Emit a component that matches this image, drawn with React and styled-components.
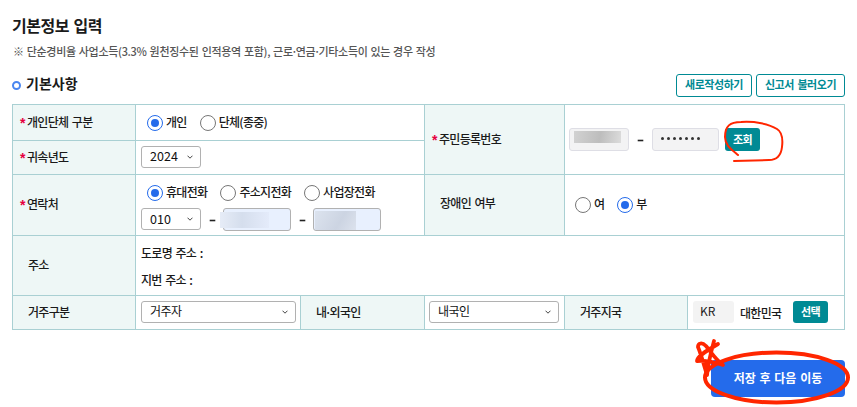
import React from 'react';
import styled, { createGlobalStyle, css } from 'styled-components';

const GlobalStyle = createGlobalStyle`
    * {
        box-sizing: border-box;
    }
    body {
        margin: 0;
        background: #fff;
        color: #1a1a1a;
        font-family: 'Noto Sans CJK KR', sans-serif;
        font-size: 12px;
        font-weight: 500;
        letter-spacing: -0.7px;
        word-spacing: 1.5px;
        line-height: 18px;
    }
`;

const Page = styled.main`
    position: relative;
    width: 857px;
    height: 407px;
    padding: 13px 12px 0;
    overflow: hidden;
`;

const Title = styled.h1`
    margin: 0;
    font-size: 16px;
    font-weight: 700;
    line-height: 24px;
    letter-spacing: -0.5px;
`;

const Notice = styled.p`
    margin: 6px 0 0 1px;
    color: #555;
    font-size: 11px;
    letter-spacing: -0.3px;
    word-spacing: 0.8px;
    line-height: 16px;
    white-space: nowrap;
`;

const Middot = styled.span`
    margin: 0 -1.5px;
`;

const SectionHeader = styled.div`
    display: flex;
    align-items: center;
    height: 23px;
    margin: 15px 0 7px;
`;

const Ring = styled.span`
    width: 9px;
    height: 9px;
    margin-right: 5px;
    border: 2px solid #4a86f0;
    border-radius: 50%;
`;

const SectionTitle = styled.h2`
    flex: 1;
    margin: 0;
    padding-bottom: 4px;
    font-size: 14px;
    font-weight: 700;
    line-height: 19px;
    letter-spacing: 0;
`;

const OutlineButton = styled.button`
    width: ${({ $width }) => $width}px;
    height: 23px;
    margin-left: 4px;
    padding: 0 0 2px;
    border: 1px solid #008a94;
    border-radius: 3px;
    background: #fff;
    color: #008a94;
    font: inherit;
    font-size: 11px;
    font-weight: 700;
    letter-spacing: -0.45px;
    word-spacing: 1.5px;
    line-height: 19px;
    white-space: nowrap;
`;

const FormGrid = styled.div`
    display: grid;
    grid-template-columns: 123px 165px 124px 140px 123px 157px;
    grid-template-rows: 36px 34px 61px 60px 34px;
    width: 833px;
    border: solid #a9d0d3;
    border-width: 1px 0 0 1px;
`;

const cell = css`
    grid-column: span ${({ $cols = 1 }) => $cols};
    grid-row: span ${({ $rows = 1 }) => $rows};
    display: flex;
    border: solid #a9d0d3;
    border-width: 0 1px 1px 0;
`;

const Label = styled.div`
    ${cell}
    align-items: center;
    padding: 0 0 ${({ $raise = 2 }) => $raise}px ${({ $required }) => ($required ? 7 : 15)}px;
    background: #eef7f6;
`;

const Star = styled.span`
    width: 7px;
    padding-top: 2px;
    color: #e6003e;
    font-family: 'Liberation Sans', sans-serif;
    font-size: 14px;
    font-weight: 700;
    line-height: 14px;
`;

const Value = styled.div`
    ${cell}
    align-items: center;
    padding-left: ${({ $left = 5 }) => $left}px;
    padding-top: ${({ $top = 0 }) => $top}px;
    padding-bottom: ${({ $bottom = 0 }) => $bottom}px;
`;

const Stack = styled.div`
    display: flex;
    flex-direction: column;
    gap: ${({ $gap }) => $gap}px;
`;

const Line = styled.div`
    display: flex;
    align-items: center;
`;

const RadioLabel = styled.label`
    display: flex;
    align-items: center;
    margin-right: ${({ $after = 0 }) => $after}px;
`;

const RadioText = styled.span`
    padding-bottom: 2px;
    line-height: 16px;
`;

const Dot = styled.span`
    display: grid;
    place-items: center;
    width: 16px;
    height: 16px;
    margin-right: 3px;
    border: 1px solid ${({ $on }) => ($on ? '#246beb' : '#777')};
    border-radius: 50%;
    background: #fff;
    &::after {
        content: '';
        width: 8px;
        height: 8px;
        border-radius: 50%;
        background: ${({ $on }) => ($on ? '#246beb' : 'transparent')};
    }
`;

const SelectBox = styled.div`
    display: flex;
    align-items: center;
    justify-content: space-between;
    width: ${({ $width }) => $width}px;
    height: 22px;
    padding: 0 7px 0 8px;
    border: 1px solid #b1b1b1;
    border-radius: 3px;
    background: #fff;
    color: #111;
    font-size: ${({ $numeric }) => ($numeric ? 12.5 : 12)}px;
    font-weight: 400;
    letter-spacing: ${({ $numeric }) => ($numeric ? '0.1px' : '-0.6px')};
    line-height: 17px;
    span {
        padding-bottom: 2px;
    }
`;

const Field = styled.div`
    display: flex;
    align-items: center;
    width: ${({ $width }) => $width}px;
    height: 23px;
    border: 1px solid ${({ $border = '#dedee5' }) => $border};
    border-radius: 3px;
    background: ${({ $fill = '#f3f3f4' }) => $fill};
`;

const Mask = styled.span`
    flex: none;
    width: ${({ $width }) => $width}px;
    height: ${({ $height }) => $height}px;
    margin: ${({ $margin }) => $margin};
    background: ${({ $tone }) => $tone};
`;

const Password = styled.span`
    display: flex;
    gap: 3px;
    margin: 0 0 3px 8px;
    i {
        width: 3px;
        height: 3px;
        border-radius: 50%;
        background: #333;
    }
`;

const Dash = styled.span`
    width: 5px;
    height: 1px;
    margin: ${({ $margin }) => $margin};
    background: #222;
    box-shadow: 0 0 0 0.3px #222;
`;

const TealButton = styled.button`
    width: 35px;
    height: ${({ $height = 22 }) => $height}px;
    margin-left: ${({ $left }) => $left}px;
    padding: 0 0 2px;
    border: 0;
    border-radius: 3px;
    background: #008a94;
    color: #fff;
    font: inherit;
    font-size: 11px;
    font-weight: 700;
    letter-spacing: -0.5px;
`;

const Country = styled.span`
    width: 41px;
    height: 22px;
    padding: 1px 0 0 7px;
    border-radius: 3px;
    background: #f3f3f3;
    color: #222;
    font-weight: 400;
    letter-spacing: 0;
`;

const CountryName = styled.span`
    width: 42px;
    margin: 3px 0 0 6px;
`;

const Footer = styled.footer`
    display: flex;
    justify-content: flex-end;
    margin-top: 30px;
`;

const SaveButton = styled.button`
    width: 134px;
    height: 37px;
    padding: 0 0 2px;
    border: 0;
    border-radius: 4px;
    background: #246beb;
    color: #fff;
    font: inherit;
    font-weight: 700;
    letter-spacing: 0;
    word-spacing: 1px;
`;

const Marks = styled.svg`
    position: absolute;
    inset: 0;
    pointer-events: none;
    fill: none;
    stroke: #ff2600;
    stroke-linecap: round;
    stroke-linejoin: round;
`;

const Chevron = () => (
    <svg width="6" height="4" viewBox="0 0 6 4" fill="none" stroke="#444" strokeWidth="1">
        <path d="M0.5 0.7 3 3.2 5.5 0.7" />
    </svg>
);

const Select = ({ width, numeric, children }) => (
    <SelectBox $width={width} $numeric={numeric}>
        <span>{children}</span>
        <Chevron />
    </SelectBox>
);

const Radio = ({ on, after, children }) => (
    <RadioLabel $after={after}>
        <Dot $on={on} />
        <RadioText>{children}</RadioText>
    </RadioLabel>
);

const Head = ({ required, rows, raise, children }) => (
    <Label $required={required} $rows={rows} $raise={raise}>
        {required && <Star>*</Star>}
        <span>{children}</span>
    </Label>
);

export default function App() {
    return (
        <>
            <GlobalStyle />
            <Page>
                <Title>기본정보 입력</Title>
                <Notice>
                    ※ 단순경비율 사업소득(3.3% 원천징수된 인적용역 포함), 근로<Middot>·</Middot>연금<Middot>·</Middot>기타소득이 있는 경우 작성
                </Notice>
                <SectionHeader>
                    <Ring />
                    <SectionTitle>기본사항</SectionTitle>
                    <OutlineButton $width={76}>새로작성하기</OutlineButton>
                    <OutlineButton $width={89}>신고서 불러오기</OutlineButton>
                </SectionHeader>

                <FormGrid>
                    <Head required>개인단체 구분</Head>
                    <Value $cols={2} $left={11}>
                        <Radio on after={13}>개인</Radio>
                        <Radio>단체(종중)</Radio>
                    </Value>
                    <Head required rows={2}>주민등록번호</Head>
                    <Value $cols={2} $rows={2} $left={4}>
                        <Field $width={60}>
                            <Mask $width={47} $height={12} $margin="-5px 0 0 4px" $tone="linear-gradient(100deg, #d2d2d2, #bdbdbd 55%, #dcdcdc)" />
                        </Field>
                        <Dash $margin="2px 9px 0" />
                        <Field $width={67}>
                            <Password>
                                <i /><i /><i /><i /><i /><i /><i />
                            </Password>
                        </Field>
                        <TealButton $left={6} $height={23}>조회</TealButton>
                    </Value>

                    <Head required>귀속년도</Head>
                    <Value $cols={2} $bottom={2}>
                        <Select width={60} numeric>2024</Select>
                    </Value>

                    <Head required raise={3}>연락처</Head>
                    <Value $cols={2} $top={4}>
                        <Stack $gap={6}>
                            <Line>
                                <Mask $width={6} $height={1} />
                                <Radio on after={13}>휴대전화</Radio>
                                <Radio after={13}>주소지전화</Radio>
                                <Radio>사업장전화</Radio>
                            </Line>
                            <Line>
                                <Select width={60} numeric>010</Select>
                                <Dash $margin="2px 8px 0 9px" />
                                <Field $width={68} $border="#b1b1b1" $fill="#e8f0fe">
                                    <Mask $width={49} $height={16} $margin="2px 0 0 -4px" $tone="linear-gradient(90deg, #e6ecf7, #d5deed 45%, #e4ebfa)" />
                                </Field>
                                <Dash $margin="2px 8px 0 9px" />
                                <Field $width={68} $border="#b1b1b1" $fill="#e8f0fe">
                                    <Mask $width={41} $height={19} $margin="2px 0 0 1px" $tone="linear-gradient(120deg, #dce3ee, #ccd4e2 60%, #dce2ed)" />
                                </Field>
                            </Line>
                        </Stack>
                    </Value>
                    <Head raise={4}>장애인 여부</Head>
                    <Value $cols={2} $left={10}>
                        <Radio after={13}>여</Radio>
                        <Radio on>부</Radio>
                    </Value>

                    <Head>주소</Head>
                    <Value $cols={5} $top={1}>
                        <Stack $gap={9}>
                            <span>도로명 주소 :</span>
                            <span>지번 주소 :</span>
                        </Stack>
                    </Value>

                    <Head>거주구분</Head>
                    <Value $bottom={2}>
                        <Select width={155}>거주자</Select>
                    </Value>
                    <Head>
                        내<Middot>·</Middot>외국인
                    </Head>
                    <Value $left={4} $bottom={2}>
                        <Select width={130}>내국인</Select>
                    </Value>
                    <Head>거주지국</Head>
                    <Value $bottom={2}>
                        <Country>KR</Country>
                        <CountryName>대한민국</CountryName>
                        <TealButton $left={11}>선택</TealButton>
                    </Value>
                </FormGrid>

                <Footer>
                    <SaveButton>저장 후 다음 이동</SaveButton>
                </Footer>

                <Marks width="857" height="407" viewBox="0 0 857 407">
                    <path strokeWidth="2" d="M738 155C731 149 725 145 725 137C725 126 730 122 741 122C755 121 769 124 777 129C782 132 783 139 782 147C781 156 777 160 769 160L734 161" />
                    <ellipse strokeWidth="4" cx="776.5" cy="377.5" rx="71.5" ry="25" />
                    <path strokeWidth="3.8" d="M714 341C711 352 708 364 707 375C704 365 701 354 698 347C698 343 702 342 706 346C711 352 716 360 723 365C714 362 706 360 697 361C697 356 708 350 718 344M707 375C705 370 705 366 705 361" />
                </Marks>
            </Page>
        </>
    );
}
